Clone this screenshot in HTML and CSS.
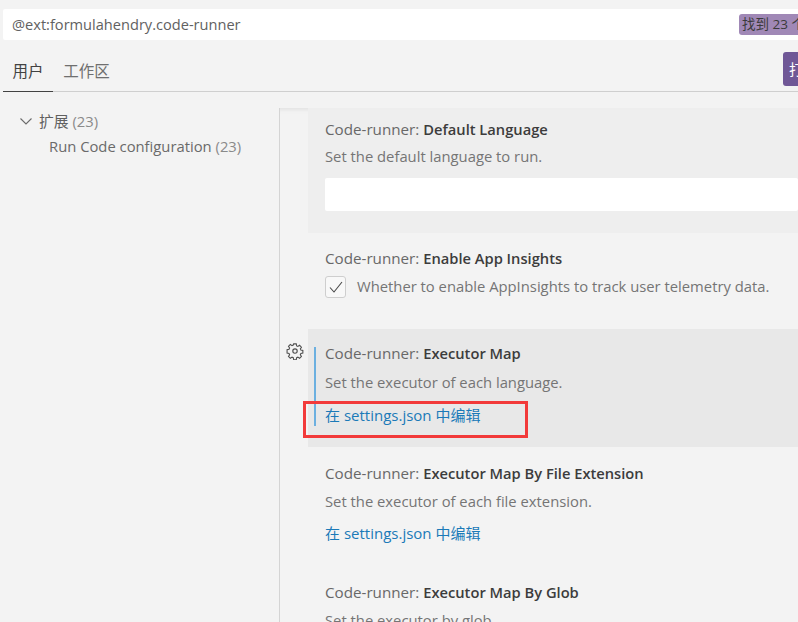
FILE: index.html
```html
<!DOCTYPE html>
<html lang="zh-CN">

<head>
    <meta charset="UTF-8">
    <title>Settings</title>
    <link rel="stylesheet" href="styles.css">
</head>

<body>
    <div class="search">
        <span class="search-text">@ext:formulahendry.code-runner</span>
        <span class="count">找到 23 个设置</span>
    </div>

    <div class="tabs">
        <span class="tab active">用户</span>
        <span class="tab">工作区</span>
        <span class="open-btn">打开设置</span>
    </div>

    <div class="main">
        <div class="tree">
            <div class="tree-top">
                <svg class="chevron" width="16" height="16" viewBox="0 0 16 16"><path d="M2.5 5.5 L8 11 L13.5 5.5" fill="none" stroke="#6b6b6b" stroke-width="1.1"/></svg>
                <span>扩展 <em>(23)</em></span>
            </div>
            <div class="tree-sub">Run Code configuration <em>(23)</em></div>
        </div>

        <div class="list">
            <div class="item first shaded">
                <div class="title">Code-runner: <b>Default Language</b></div>
                <div class="desc">Set the default language to run.</div>
                <div class="input"></div>
            </div>

            <div class="item insights">
                <div class="title">Code-runner: <b>Enable App Insights</b></div>
                <div class="check-row">
                    <span class="checkbox">
                        <svg width="16" height="16" viewBox="0 0 16 16"><path d="M2 8.5 L6 13 L14 3" fill="none" stroke="#4a4a4a" stroke-width="1.1"/></svg>
                    </span>
                    <span class="desc">Whether to enable AppInsights to track user telemetry data.</span>
                </div>
            </div>

            <div class="item focused">
                <svg class="gear" width="18" height="18" viewBox="0 0 18 18" fill="none" stroke="#4f4f4f" stroke-width="1.15">
                    <path d="M7.6 1.5h2.8l.4 2.1 1.3.6 1.8-1.2 2 2-1.2 1.8.6 1.3 2.1.4v2.8l-2.1.4-.6 1.3 1.2 1.8-2 2-1.8-1.2-1.3.6-.4 2.1H7.6l-.4-2.1-1.3-.6-1.8 1.2-2-2 1.2-1.8-.6-1.3-2.1-.4V7.6l2.1-.4.6-1.3-1.2-1.8 2-2 1.8 1.2 1.3-.6z" transform="translate(.5 .5) scale(.94)"/>
                    <circle cx="9" cy="9" r="2.2"/>
                </svg>
                <div class="focus-line">
                    <div class="title">Code-runner: <b>Executor Map</b></div>
                    <div class="desc">Set the executor of each language.</div>
                    <a class="link">在 settings.json 中编辑</a>
                </div>
                <div class="red-box"></div>
            </div>

            <div class="item map-ext">
                <div class="title">Code-runner: <b>Executor Map By File Extension</b></div>
                <div class="desc">Set the executor of each file extension.</div>
                <a class="link">在 settings.json 中编辑</a>
            </div>

            <div class="item map-glob">
                <div class="title">Code-runner: <b>Executor Map By Glob</b></div>
                <div class="desc">Set the executor by glob.</div>
            </div>
        </div>
    </div>
</body>
</html>
```

FILE: styles.css
```css
html, body {
    height: 100%;
}

body {
    margin: 0;
    padding: 9px 0 0 3px;
    box-sizing: border-box;
    overflow: hidden;
    background-color: #f3f3f3;
    color: #616161;
    font-family: "Open Sans", "Noto Sans CJK SC", sans-serif;
    font-size: 14.8px;
    line-height: 18px;
}

em {
    font-style: normal;
    color: #8a8a8a;
}

.search {
    height: 31px;
    background-color: #fff;
    display: flex;
    align-items: center;
    justify-content: space-between;
    padding-left: 9px;
    border-radius: 2px 0 0 2px;
    white-space: nowrap;
    overflow: hidden;
}

.search-text {
    padding-bottom: 2px;
    color: #616161;
    font-size: 14.6px;
}

.count {
    width: 59px;
    flex: none;
    overflow: hidden;
    background-color: #a088b6;
    color: #3b3b3b;
    border-radius: 3px 0 0 3px;
    font-size: 13.5px;
    height: 21px;
    line-height: 21px;
    padding-left: 3px;
    box-sizing: border-box;
}

.tabs {
    height: 52px;
    display: flex;
    align-items: flex-end;
    border-bottom: 1px solid #cfcfcf;
    position: relative;
    box-sizing: border-box;
    margin-bottom: 16px;
}

.tab {
    width: 67px;
    height: 31px;
    padding-top: 2px;
    box-sizing: border-box;
    text-align: center;
    color: #6f6f6f;
    font-size: 15.5px;
}

.tab.active {
    width: 50px;
    height: 32px;
    margin-bottom: -1px;
    color: #424242;
    border-bottom: 1px solid #424242;
}

.open-btn {
    position: absolute;
    left: 780px;
    top: 12px;
    width: 60px;
    height: 34px;
    line-height: 34px;
    padding-left: 6px;
    box-sizing: border-box;
    background-color: #6f5796;
    color: #fff;
    border-radius: 3px;
    white-space: nowrap;
}

.main {
    display: flex;
    height: 520px;
}

.tree {
    width: 277px;
    flex: none;
    box-sizing: border-box;
    border-right: 1px solid #d4d4d4;
}

.tree-top {
    display: flex;
    align-items: center;
    height: 26px;
    padding-left: 15px;
    gap: 5px;
    color: #5f5f5f;
}

.tree-sub {
    height: 26px;
    line-height: 24px;
    padding-left: 46px;
    color: #6a6a6a;
    white-space: nowrap;
}

.list {
    flex: 1;
    min-width: 0;
    padding-left: 28px;
    box-shadow: inset 0 6px 5px -5px #dcdcdc;
}

.item {
    position: relative;
    box-sizing: border-box;
    padding-left: 17px;
    white-space: nowrap;
}

.item.first {
    height: 125px;
    padding-top: 12px;
}

.item.shaded {
    background-color: #eeeeee;
}

.item.insights {
    height: 96px;
    padding-top: 16px;
}

.item.focused {
    height: 118px;
    padding: 18px 0 0 6px;
    background-color: #e8e8e8;
}

.item.map-ext {
    height: 119px;
    padding-top: 17px;
}

.item.map-glob {
    padding-top: 17px;
}

.title {
    height: 20px;
    color: #686868;
    font-size: 15.2px;
}

.title b {
    font-weight: 600;
    font-size: 14.7px;
    color: #3c3c3c;
}

.desc {
    margin-top: 8px;
    height: 20px;
    color: #757575;
}

.first .desc {
    margin-top: 7px;
}

.input {
    margin-top: 11px;
    height: 33px;
    background-color: #fff;
    border-radius: 2px;
}

.check-row {
    display: flex;
    align-items: center;
    margin-top: 7px;
    gap: 11px;
}

.check-row .desc {
    margin-top: 0;
}

.checkbox {
    width: 21px;
    height: 22px;
    box-sizing: border-box;
    border: 1px solid #cecece;
    border-radius: 3px;
    background-color: #f8f8f8;
    display: flex;
    align-items: center;
    justify-content: center;
}

.gear {
    position: absolute;
    left: -22px;
    top: 13px;
}

.focus-line {
    border-left: 2px solid #6cb0e0;
    height: 79px;
    padding-left: 9px;
}

.focus-line .title {
    position: relative;
    top: -3px;
    margin-bottom: -2px;
}

.link {
    display: block;
    margin-top: 12px;
    font-size: 15px;
    color: #1b7ab8;
}

.focused .link {
    margin-top: 13px;
}

.red-box {
    position: absolute;
    left: -5px;
    top: 72px;
    width: 225px;
    height: 37px;
    box-sizing: border-box;
    border: 3px solid #f23a3a;
}
```
